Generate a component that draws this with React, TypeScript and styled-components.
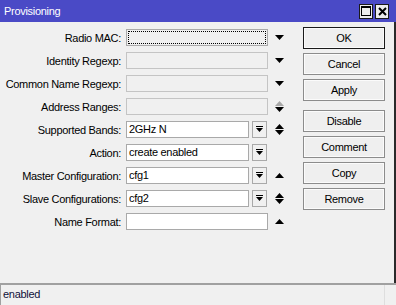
import { Fragment } from "react";
import styled, { createGlobalStyle } from "styled-components";

const Global = createGlobalStyle`
  html, body {
    margin: 0;
    padding: 0;
    background: #f0f0f0;
  }
  body {
    font-family: "Liberation Sans", Arial, sans-serif;
    font-size: 11px;
    letter-spacing: -0.3px;
    color: #000;
  }
`;

const Window = styled.div`
  width: 396px;
  height: 305px;
  display: flex;
  flex-direction: column;
  background: #f0f0f0;
  box-sizing: border-box;
  overflow: hidden;
`;

const TitleBar = styled.div`
  height: 22px;
  flex: none;
  display: flex;
  align-items: center;
  padding-left: 4px;
  background: #4a4ac6;
  color: #fff;
`;

const Title = styled.span`
  font-size: 11px;
`;

const TitleButtons = styled.div`
  margin-left: auto;
  margin-right: 7px;
  display: flex;
  gap: 2px;
`;

const TitleButton = styled.div`
  width: 14px;
  height: 15px;
  box-sizing: border-box;
  border: 1px solid #1a1a1a;
  background: #ececec;
  display: flex;
  align-items: center;
  justify-content: center;
`;

const Body = styled.div`
  flex: 1;
  display: flex;
  border-right: 2px solid #2a2a2a;
`;

const Form = styled.div`
  display: grid;
  grid-template-columns: 121px 142px 13px;
  grid-auto-rows: 23px;
  column-gap: 5px;
  padding-top: 4px;
  align-items: center;
  align-content: start;
`;

const Label = styled.div`
  text-align: right;
  white-space: nowrap;
`;

const Field = styled.div<{ $variant?: "focus" | "disabled" | "normal" }>`
  height: 17px;
  box-sizing: border-box;
  border: 1px solid ${(p) => (p.$variant === "disabled" ? "#c4c4c4" : "#a9a9a9")};
  background: ${(p) => (p.$variant === "normal" ? "#fff" : "#f0f0f0")};
  padding-left: 2px;
  line-height: 15px;
  flex: 1;
  white-space: nowrap;
  overflow: hidden;
  ${(p) =>
    p.$variant === "focus" &&
    `outline: 1px dotted #000; outline-offset: -3px;`}
`;

const Combo = styled.div`
  display: flex;
  gap: 3px;
  width: 141px;
`;

const DropButton = styled.div`
  width: 15px;
  height: 17px;
  box-sizing: border-box;
  border: 1px solid #a9a9a9;
  background: #f0f0f0;
  display: flex;
  align-items: center;
  justify-content: center;
  flex: none;
`;

const Arrows = styled.div`
  display: flex;
  flex-direction: column;
  align-items: center;
  justify-content: center;
  gap: 1px;
`;

const ButtonColumn = styled.div`
  margin-left: 17px;
  padding-top: 5px;
  display: flex;
  flex-direction: column;
  gap: 4px;
  width: 82px;
`;

const Button = styled.div<{ $default?: boolean; $spaced?: boolean }>`
  height: 22px;
  box-sizing: border-box;
  border: 1px solid ${(p) => (p.$default ? "#1a1a1a" : "#8c8c8c")};
  box-shadow: inset 0 0 0 1px #fbfbfb;
  background: #efefef;
  display: flex;
  align-items: center;
  justify-content: center;
  margin-top: ${(p) => (p.$spaced ? "5px" : "0")};
`;

const StatusBar = styled.div`
  height: 22px;
  flex: none;
  display: flex;
  border-top: 2px solid #a0a0a0;
  box-sizing: border-box;
`;

const StatusPanel = styled.div`
  width: 385px;
  box-sizing: border-box;
  border-left: 1px solid #a0a0a0;
  border-right: 1px solid #dedede;
  padding-left: 2px;
  line-height: 18px;
  color: #10103a;
`;

const Down = ({ color = "#000" }: { color?: string }) => (
  <svg width="9" height="5" viewBox="0 0 9 5">
    <polygon points="0,0 9,0 4.5,5" fill={color} />
  </svg>
);

const Up = ({ color = "#000" }: { color?: string }) => (
  <svg width="9" height="5" viewBox="0 0 9 5">
    <polygon points="0,5 9,5 4.5,0" fill={color} />
  </svg>
);

const DropIcon = () => (
  <svg width="7" height="7" viewBox="0 0 7 7">
    <rect x="0" y="0" width="7" height="1" fill="#000" />
    <polygon points="0,2 7,2 3.5,6" fill="#000" />
  </svg>
);

type Row = {
  label: string;
  value?: string;
  kind: "focus" | "disabled" | "normal";
  combo?: boolean;
  up?: "black" | "gray";
  down?: boolean;
};

const rows: Row[] = [
  { label: "Radio MAC:", kind: "focus", down: true },
  { label: "Identity Regexp:", kind: "disabled", down: true },
  { label: "Common Name Regexp:", kind: "disabled", down: true },
  { label: "Address Ranges:", kind: "disabled", up: "gray", down: true },
  { label: "Supported Bands:", value: "2GHz N", kind: "normal", combo: true, up: "black", down: true },
  { label: "Action:", value: "create enabled", kind: "normal", combo: true },
  { label: "Master Configuration:", value: "cfg1", kind: "normal", combo: true, up: "black" },
  { label: "Slave Configurations:", value: "cfg2", kind: "normal", combo: true, up: "black", down: true },
  { label: "Name Format:", kind: "normal", up: "black" },
];

const buttons = ["OK", "Cancel", "Apply", "Disable", "Comment", "Copy", "Remove"];

export default function App() {
  return (
    <Window>
      <Global />
      <TitleBar>
        <Title>Provisioning</Title>
        <TitleButtons>
          <TitleButton>
            <svg width="10" height="10" viewBox="0 0 10 10">
              <rect x="0.5" y="0.5" width="9" height="9" fill="none" stroke="#000" />
              <rect x="0" y="0" width="10" height="2" fill="#000" />
            </svg>
          </TitleButton>
          <TitleButton>
            <svg width="9" height="9" viewBox="0 0 9 9">
              <path d="M1 1 L8 8 M8 1 L1 8" stroke="#000" strokeWidth="2" />
            </svg>
          </TitleButton>
        </TitleButtons>
      </TitleBar>
      <Body>
        <Form>
          {rows.map((r) => (
            <Fragment key={r.label}>
              <Label>{r.label}</Label>
              {r.combo ? (
                <Combo>
                  <Field $variant={r.kind}>{r.value}</Field>
                  <DropButton>
                    <DropIcon />
                  </DropButton>
                </Combo>
              ) : (
                <Field $variant={r.kind}>{r.value}</Field>
              )}
              <Arrows>
                {r.up && <Up color={r.up === "gray" ? "#a8a8a8" : "#000"} />}
                {r.down && <Down />}
              </Arrows>
            </Fragment>
          ))}
        </Form>
        <ButtonColumn>
          {buttons.map((b) => (
            <Button key={b} $default={b === "OK"} $spaced={b === "Disable"}>
              {b}
            </Button>
          ))}
        </ButtonColumn>
      </Body>
      <StatusBar>
        <StatusPanel>enabled</StatusPanel>
      </StatusBar>
    </Window>
  );
}
